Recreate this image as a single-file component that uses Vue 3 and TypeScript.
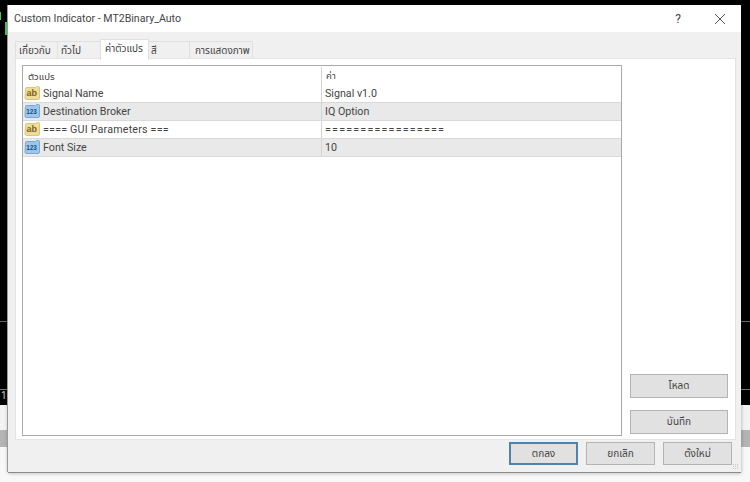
<script setup lang="ts">
interface Row { icon: 'ab' | '123'; name: string; value: string; eq?: boolean }
const rows: Row[] = [
  { icon: 'ab', name: 'Signal Name', value: 'Signal v1.0' },
  { icon: '123', name: 'Destination Broker', value: 'IQ Option' },
  { icon: 'ab', name: '==== GUI Parameters ===', value: '=================', eq: true },
  { icon: '123', name: 'Font Size', value: '10' },
]
const tabs = [
  { label: 'เกี่ยวกับ', w: 43, pad: 3 },
  { label: 'ทั่วไป', w: 44, pad: 3 },
  { label: 'ค่าตัวแปร', w: 49, pad: 4, active: true },
  { label: 'สี', w: 42, pad: 2 },
  { label: 'การแสดงภาพ', w: 64, pad: 5 },
]
</script>

<template>
  <div class="desktop">
    <div class="chart">
      <span class="tick">10</span>
      <i class="candle c-a"></i>
      <i class="candle c-b"></i>
    </div>
    <div class="strip-light"></div>
    <div class="strip-gray"></div>
    <div class="strip-pale"></div>

    <div class="window">
      <header class="titlebar">
        <span class="title">Custom Indicator - MT2Binary_Auto</span>
        <span class="help">?</span>
        <svg class="close" width="12" height="12" viewBox="0 0 12 12">
          <path d="M1 1 L11 11 M11 1 L1 11" stroke="#555" stroke-width="1" fill="none" />
        </svg>
      </header>
      <div class="body">
        <div class="tabs">
          <div
            v-for="t in tabs"
            :key="t.label"
            class="tab"
            :class="{ active: t.active }"
            :style="{ width: t.w + 'px', paddingLeft: t.pad + 'px' }"
          >{{ t.label }}</div>
        </div>
        <div class="panel">
          <div class="table">
            <div class="row head">
              <div class="c1 thai">ตัวแปร</div>
              <div class="c2 thai">ค่า</div>
            </div>
            <div v-for="(r, i) in rows" :key="i" class="row" :class="{ alt: i % 2 === 1 }">
              <div class="c1">
                <svg class="ico" width="17" height="17" viewBox="0 0 17 17">
                  <template v-if="r.icon === 'ab'">
                    <path d="M1.5 3.5 q0-1 1-1 h9 l1-1 h2 q1 0 1 1 v10.5 q0 1.5 -1.5 1.5 h-11.5 q-1.5 0 -1.5 -1.5 z" fill="#f0dc96" stroke="#d8c67e" stroke-width="1" />
                    <text x="2.6" y="11" class="ico-t ab">ab</text>
                  </template>
                  <template v-else>
                    <path d="M1.5 3.5 q0-1 1-1 h9 l1-1 h2 q1 0 1 1 v10.5 q0 1.5 -1.5 1.5 h-11.5 q-1.5 0 -1.5 -1.5 z" fill="#9cc6ea" stroke="#7aa8d2" stroke-width="1" />
                    <text x="2.2" y="11" class="ico-t num">123</text>
                  </template>
                </svg>
                <span :class="{ eqn: r.eq }">{{ r.name }}</span>
              </div>
              <div class="c2" :class="{ eqv: r.eq }">{{ r.value }}</div>
            </div>
          </div>
          <div class="side">
            <button class="btn side-btn">โหลด</button>
            <button class="btn side-btn">บันทึก</button>
          </div>
        </div>
        <div class="footer">
          <button class="btn foot-btn default">ตกลง</button>
          <button class="btn foot-btn">ยกเลิก</button>
          <button class="btn foot-btn">ตั้งใหม่</button>
        </div>
      </div>
      <svg class="grip" width="6" height="6" viewBox="0 0 6 6">
        <path d="M0 0h1v1H0zM2 0h1v1H2zM4 0h1v1H4zM0 2h1v1H0zM2 2h1v1H2zM4 2h1v1H4zM0 4h1v1H0zM2 4h1v1H2zM4 4h1v1H4z" fill="#c8c8c8" />
      </svg>
    </div>
  </div>
</template>

<style>
html, body { margin: 0; background: #000; }
</style>

<style scoped>
.desktop {
  position: relative;
  width: 750px;
  height: 482px;
  overflow: hidden;
  background: #fff;
  font-family: Roboto, "Noto Sans", "Noto Sans Thai", sans-serif;
  color: #444;
}
.chart {
  position: relative;
  height: 405px;
  background: #000;
}
.chart::before {
  content: "";
  position: absolute;
  left: 0;
  right: 0;
  top: 321px;
  border-top: 1px solid #666;
}
.chart::after {
  content: "";
  position: absolute;
  left: 0;
  right: 0;
  top: 389px;
  border-top: 1px solid #777;
}
.candle { position: absolute; background: #3ecf5a; }
.c-a { left: 0; top: 12px; width: 1px; height: 8px; }
.c-b { left: 5px; top: 22px; width: 2px; height: 13px; }
.tick {
  position: absolute;
  left: 1px;
  top: 390px;
  font-size: 10px;
  line-height: 12px;
  color: #ccc;
}
.strip-light { height: 25px; background: #f3f3f3; }
.strip-gray { height: 17px; background: #b4b4b4; }
.strip-pale { height: 35px; background: #f8f8f8; }
.window {
  position: absolute;
  left: 8px;
  top: 5px;
  width: 733px;
  height: 467px;
  box-shadow: 0 1px 0 #8a8a8a, -1px 0 0 #9a9a9a, 0 1px 4px rgba(0, 0, 0, 0.3);
  background: #f0f0f0;
  display: flex;
  flex-direction: column;
}
.titlebar {
  height: 27px;
  background: #fff;
  display: flex;
  align-items: center;
  padding: 0 0 0 6px;
  flex: none;
}
.title { font-size: 10.6px; color: #444; flex: 1; }
.help { font-size: 12px; color: #444; margin-right: 33px; }
.close { margin-right: 15px; }
.body { flex: 1; padding: 7px 5px 0 7px; display: flex; flex-direction: column; min-height: 0; }
.tabs { display: flex; height: 19px; flex: none; }
.tab {
  height: 18px;
  margin-top: 2px;
  box-sizing: border-box;
  background: #f0f0f0;
  border: 1px solid #e0e0e0;
  border-bottom: 0;
  margin-right: -1px;
  font-size: 10px;
  line-height: 17px;
  text-align: left;
  color: #444;
  white-space: nowrap;
}
.tab.active {
  background: #fff;
  height: 21px;
  margin-top: 0;
  position: relative;
  z-index: 1;
}
.panel {
  width: 721px;
  height: 382px;
  background: #fff;
  flex: none;
  box-sizing: border-box;
  border: 1px solid #e4e4e4;
  padding: 6px 0 0 6px;
  display: flex;
}
.table {
  width: 600px;
  height: 371px;
  box-sizing: border-box;
  border: 1px solid #a9a9a9;
  background: #fff;
  padding-top: 1px;
  flex: none;
}
.row { display: flex; height: 18px; box-sizing: border-box; border-bottom: 1px solid #d9d9d9; font-size: 10.7px; line-height: 17px; }
.row.head { border-bottom: 0; font-size: 9.6px; }
.row.alt { background: #e9e9e9; }
.c1 { width: 299px; flex: none; display: flex; align-items: center; box-sizing: border-box; border-right: 1px solid #d4d4d4; padding-left: 1px; }
.c2 { flex: 1; padding-left: 3px; }
.thai { padding-left: 5px; }
.c2.thai { padding-left: 4px; }
.ico { flex: none; margin-right: 2px; }
.ico-t { font-family: "Liberation Sans", sans-serif; font-weight: 700; }
.ab { font-size: 9px; fill: #7a6420; }
.num { font-size: 6.4px; fill: #174f88; }
.eqn { letter-spacing: 0.2px; }
.eqv { letter-spacing: 1.2px; }
.side {
  margin-left: 8px;
  width: 98px;
  display: flex;
  flex-direction: column;
  justify-content: flex-end;
  gap: 12px;
  padding-bottom: 2px;
  height: 371px;
  box-sizing: border-box;
  flex: none;
}
.btn {
  font-family: inherit;
  font-size: 10px;
  color: #444;
  background: #e1e1e1;
  border: 1px solid #b4b4b4;
  padding: 0;
  box-sizing: border-box;
}
.side-btn { width: 98px; height: 24px; }
.footer { display: flex; justify-content: flex-end; gap: 8px; padding: 2px 4px 0 0; }
.foot-btn { width: 69px; height: 23px; }
.default { border: 2px solid #4f83ab; }
.grip { position: absolute; right: 2px; bottom: 2px; }
</style>
